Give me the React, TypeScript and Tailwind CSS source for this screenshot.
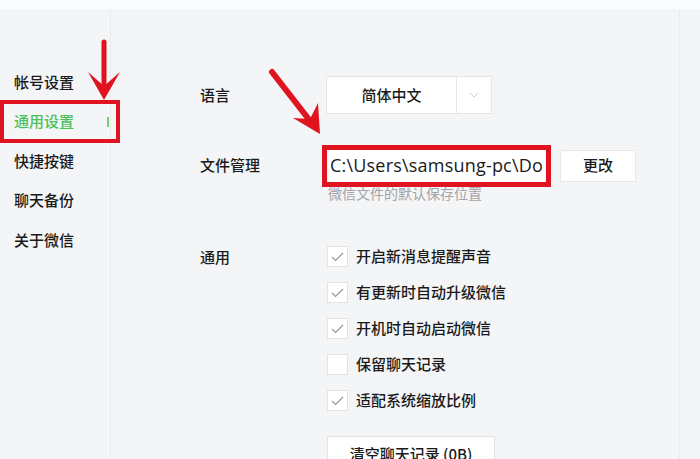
import React from 'react'

const font = { fontFamily: '"Noto Sans CJK SC", "Noto Sans", sans-serif' }

const menu = ['帐号设置', '通用设置', '快捷按键', '聊天备份', '关于微信']

const options = [
    { label: '开启新消息提醒声音', checked: true },
    { label: '有更新时自动升级微信', checked: true },
    { label: '开机时自动启动微信', checked: true },
    { label: '保留聊天记录', checked: false },
    { label: '适配系统缩放比例', checked: true },
]

const Check = ({ checked }: { checked: boolean }) => (
    <div className="w-[21px] h-[21px] bg-white border border-[#e3e4e6] flex items-center justify-center shrink-0">
        {checked && (
            <svg width="13" height="10" viewBox="0 0 13 10" fill="none">
                <path d="M1 5 L4.5 8.5 L12 1" stroke="#8f9a94" strokeWidth="1.2" />
            </svg>
        )}
    </div>
)

const App: React.FC = () => {
    return (
        <div className="relative w-[700px] h-[459px] overflow-hidden bg-[#f4f5f7] text-[#1a1a1a] font-medium" style={font}>
            <div className="h-[11px] bg-[#fbfcfd] border-b border-[#eceef0]"></div>
            <div className="flex h-[448px]">
                {/* sidebar */}
                <div className="w-[111px] border-r border-[#e8e9eb] pt-[51px] shrink-0">
                    {menu.map((m, i) => (
                        <div key={i} className="h-[39.5px] flex items-center pl-[14px] relative">
                            <span className={i === 1 ? 'text-[15px] text-[#4cc05a]' : 'text-[15px] text-[#1a1a1a]'}>{m}</span>
                            {i === 1 && <span className="absolute right-[1px] top-[15px] w-[2px] h-[10px] bg-[#6fcf7a]"></span>}
                        </div>
                    ))}
                </div>

                {/* content */}
                <div className="flex-1 pl-[89px] pt-[65px] border-r border-[#e9eaec] mr-[20px]">
                    <div className="flex items-center h-[38px]">
                        <div className="w-[126px] text-[15px]">语言</div>
                        <div className="flex h-[38px] bg-white border border-[#e4e5e7]">
                            <div className="w-[130px] flex items-center justify-center text-[15px] border-r border-[#e4e5e7]">简体中文</div>
                            <div className="w-[34px] flex items-center justify-center">
                                <svg width="10" height="6" viewBox="0 0 10 6" fill="none">
                                    <path d="M1 1 L5 5 L9 1" stroke="#c9cbce" strokeWidth="1" />
                                </svg>
                            </div>
                        </div>
                    </div>

                    <div className="flex items-center h-[37px] mt-[33px]">
                        <div className="w-[128px] text-[15px]">文件管理</div>
                        <div className="w-[217px] h-[37px] bg-white flex items-center pl-[2px] text-[18px] font-normal tracking-[0.2px] whitespace-nowrap overflow-hidden" style={{ fontFamily: '"Open Sans", "Noto Sans", sans-serif' }}>
                            C:\Users\samsung-pc\Do
                        </div>
                        <div className="ml-[15px] w-[76px] h-[32px] bg-white border border-[#e6e7e9] flex items-center justify-center text-[15px]">更改</div>
                    </div>
                    <div className="pl-[128px] text-[14px] font-normal text-[#a2a4a8] leading-[16px] mt-[1px]">微信文件的默认保存位置</div>

                    <div className="flex mt-[45px]">
                        <div className="w-[127px] text-[15px] leading-[21px]">通用</div>
                        <div className="flex flex-col gap-[15px]">
                            {options.map((o, i) => (
                                <div key={i} className="flex items-center gap-[8px] h-[21px]">
                                    <Check checked={o.checked} />
                                    <span className="text-[15px]">{o.label}</span>
                                </div>
                            ))}
                            <div className="mt-[10px] w-[168px] h-[36px] bg-white border border-[#e3e4e6] flex items-center justify-center text-[15px]">清空聊天记录 (0B)</div>
                        </div>
                    </div>
                </div>
            </div>

            {/* annotations */}
            <div className="absolute left-[0px] top-[100px] w-[120px] h-[43px] border-[4px] border-[#df1420]"></div>
            <div className="absolute left-[322px] top-[145px] w-[229px] h-[42px] border-[5px] border-[#df1420]"></div>
            <svg className="absolute left-0 top-0" width="700" height="459" viewBox="0 0 700 459" fill="none">
                <path d="M104 42 L104 92" stroke="#df1420" strokeWidth="5" strokeLinecap="round" />
                <path d="M88 72 L104 100 L120 72 L104 86 Z" fill="#df1420" />
                <path d="M272 72 L314 126" stroke="#df1420" strokeWidth="6" strokeLinecap="round" />
                <path d="M293 118 L320 134 L318 103 L310 119 Z" fill="#df1420" />
            </svg>
        </div>
    )
}

export default App
